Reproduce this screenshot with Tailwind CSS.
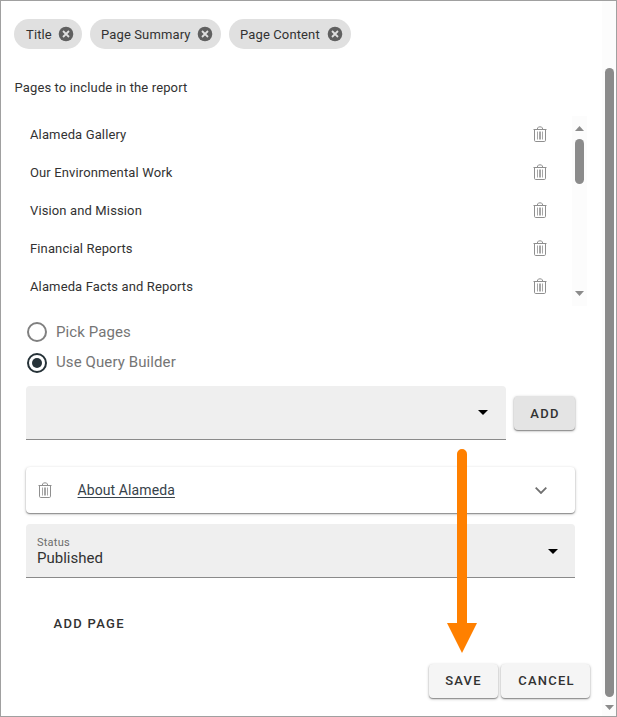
<!DOCTYPE html>
<html lang="en">
<head>
<meta charset="utf-8">
<title>Report pages</title>
<script src="https://cdn.jsdelivr.net/npm/@tailwindcss/browser@4"></script>
</head>
<body class="font-['Roboto',sans-serif] text-[#323232] bg-white">
<svg class="hidden">
  <symbol id="trash" viewBox="0 0 14 16"><g fill="none" stroke="#8f8f8f"><path d="M.5 3.500h13M4.200 3.200l.8-1.700q.3-.6 1-.6h2q.7 0 1 .6l.8 1.700" stroke-width="1"/><path d="M1.500 3.500v10.800q0 1.200 1.200 1.200h8.600q1.200 0 1.200-1.200V3.500" stroke-width="1"/><path d="M4.500 5.500v8M6.500 5.500v8M7.500 5.500v8M9.500 5.500v8" stroke-width=".8"/></g></symbol>
  <symbol id="close" viewBox="0 0 16 16"><circle cx="8" cy="8" r="7.300" fill="#606060"/><path d="M5 5l6 6M11 5l-6 6" stroke="#e0e0e0" stroke-width="1.800"/></symbol>
</svg>
<div class="relative flex w-[617px] h-[717px] border border-[#a0a0a0] overflow-hidden">
  <main class="flex flex-col w-[601px] shrink-0 pt-[18px]">
    <div class="flex gap-2 pl-[13px] text-[13px] tracking-[0.13px] whitespace-nowrap">
      <div class="flex items-center justify-between w-[68px] h-[30px] rounded-full bg-[#e0e0e0] pl-3 pr-2"><span class="pt-px">Title</span><svg class="size-4"><use href="#close"/></svg></div>
      <div class="flex items-center justify-between w-[131px] h-[30px] rounded-full bg-[#e0e0e0] pl-[11px] pr-2"><span class="pt-px">Page Summary</span><svg class="size-4"><use href="#close"/></svg></div>
      <div class="flex items-center justify-between w-[122px] h-[30px] rounded-full bg-[#e0e0e0] pl-[11px] pr-2"><span class="pt-px">Page Content</span><svg class="size-4"><use href="#close"/></svg></div>
    </div>
    <p class="mt-[29px] pl-[13.5px] h-5 leading-5 text-[13px] tracking-[0.13px]">Pages to include in the report</p>
    <div class="flex mt-[17px] h-[190px]">
      <ul class="w-[546px] pl-[29px] text-[13px] tracking-[0.13px]">
        <li class="flex items-center justify-between h-[38px]"><span class="pt-px">Alameda Gallery</span><svg class="w-[14px] h-4"><use href="#trash"/></svg></li>
        <li class="flex items-center justify-between h-[38px]"><span class="pt-px">Our Environmental Work</span><svg class="w-[14px] h-4"><use href="#trash"/></svg></li>
        <li class="flex items-center justify-between h-[38px]"><span class="pt-px">Vision and Mission</span><svg class="w-[14px] h-4"><use href="#trash"/></svg></li>
        <li class="flex items-center justify-between h-[38px]"><span class="pt-px">Financial Reports</span><svg class="w-[14px] h-4"><use href="#trash"/></svg></li>
        <li class="flex items-center justify-between h-[38px]"><span class="pt-px">Alameda Facts and Reports</span><svg class="w-[14px] h-4"><use href="#trash"/></svg></li>
      </ul>
      <div class="flex flex-col items-center ml-[25px] mt-px w-[15px] h-[190px] bg-[#fcfcfc] pt-[10px] pb-[10px] pr-px">
        <svg class="w-[9px] h-[5px]" viewBox="0 0 9 5"><path d="M0 5L4.500 0 9 5z" fill="#8b8b8b"/></svg>
        <div class="mt-2 w-[9px] h-[45px] rounded-full bg-[#8b8b8b]"></div>
        <svg class="mt-auto w-[9px] h-[5px]" viewBox="0 0 9 5"><path d="M0 0l4.500 5L9 0z" fill="#8b8b8b"/></svg>
      </div>
    </div>
    <div class="flex flex-col pt-[11px] pl-[26px] text-[15px] tracking-[0.1px] text-[#757575]">
      <label class="flex items-center h-[31px] gap-[9px]"><span class="size-5 rounded-full border-2 border-[#808080]"></span><span class="pt-px">Pick Pages</span></label>
      <label class="flex items-center h-[31px] gap-[9px]"><span class="flex items-center justify-center size-5 rounded-full border-2 border-[#263238]"><span class="size-[10px] rounded-full bg-[#263238]"></span></span>Use Query Builder</label>
    </div>
    <div class="flex items-start mt-[8px] pl-[25px] gap-2">
      <div class="flex items-center justify-end w-[480px] h-[54px] pr-[18px] rounded-t bg-[#efefef] border-b border-[#8a8a8a]"><svg class="w-[10px] h-[5px]" viewBox="0 0 10 5"><path d="M0 0l5 5 5-5z"/></svg></div>
      <button class="mt-[10px] w-[61px] h-[34px] rounded bg-[#e4e4e4] shadow-[0_1px_3px_rgba(0,0,0,.3),0_1px_1px_rgba(0,0,0,.3)] text-[13px] font-medium tracking-[1.25px] pl-px pt-[2px]">ADD</button>
    </div>
    <div class="flex items-center mt-[27px] ml-[25px] w-[549px] h-[46px] rounded bg-white shadow-[0_1px_3px_rgba(0,0,0,.3),0_1px_1px_rgba(0,0,0,.3)] pl-3 pr-[28px]">
      <svg class="w-[14px] h-4"><use href="#trash"/></svg>
      <a class="ml-[25.500px] pt-px text-[14px] tracking-[0.1px] underline underline-offset-2 text-[#37424a]">About Alameda</a>
      <svg class="ml-auto w-3 h-[7px]" viewBox="0 0 12 7"><path d="M.7.7L6 6 11.300.7" fill="none" stroke="#707070" stroke-width="1.800"/></svg>
    </div>
    <div class="flex items-center justify-between mt-[11px] ml-[25px] w-[549px] h-[54px] pl-[11px] pr-[17px] rounded-t bg-[#efefef] border-b border-[#8a8a8a]">
      <div class="pt-[2px]"><div class="text-[11px] leading-[14px] tracking-[0.23px] text-[#6c6c6c]">Status</div><div class="text-[15px] leading-[17px]">Published</div></div>
      <svg class="mt-[2px] w-[10px] h-[5px]" viewBox="0 0 10 5"><path d="M0 0l5 5 5-5z"/></svg>
    </div>
    <button class="mt-[36px] ml-[52.5px] h-5 self-start leading-5 text-[13px] font-medium tracking-[1.3px]">ADD PAGE</button>
    <div class="flex mt-[30px] ml-[428px] gap-[3px] text-[13px] font-medium tracking-[1.250px]">
      <button class="w-[69px] h-[34px] rounded bg-[#f5f5f5] shadow-[0_1px_3px_rgba(0,0,0,.3),0_1px_1px_rgba(0,0,0,.3)]">SAVE</button>
      <button class="w-[89px] h-[34px] rounded bg-[#f5f5f5] shadow-[0_1px_3px_rgba(0,0,0,.3),0_1px_1px_rgba(0,0,0,.3)] pl-[2px]">CANCEL</button>
    </div>
  </main>
  <div class="flex flex-col items-center w-[14px] shrink-0 bg-[#fcfcfc] pt-[67px]">
    <div class="w-[9px] h-[629px] rounded-full bg-[#8b8b8b]"></div>
    <svg class="mt-2 w-[9px] h-[5px]" viewBox="0 0 9 5"><path d="M0 0l4.500 5L9 0z" fill="#8b8b8b"/></svg>
  </div>
  <svg class="absolute left-[446px] top-[448px] w-[30px] h-[205px]" viewBox="0 0 30 205"><path d="M10 5a5 5 0 0 1 10 0V174h10L15 204 0 174h10z" fill="#ff8000"/></svg>
</div>
</body>
</html>
